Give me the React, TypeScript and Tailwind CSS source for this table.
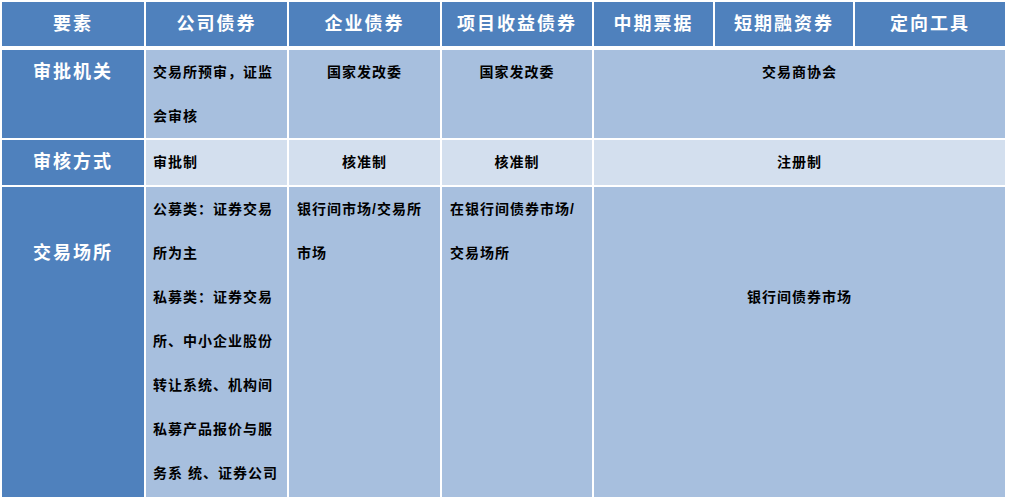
// 债券品种对比表 — 要素 / 审批机关 / 审核方式 / 交易场所

const cols = "grid grid-cols-[142px_141px_151px_150px_119px_138px_150px] gap-x-[2px]";

const headers = ["要素", "公司债券", "企业债券", "项目收益债券", "中期票据", "短期融资券", "定向工具"];

const Side = ({ children, pad = "" }: { children: React.ReactNode; pad?: string }) => (
  <div className={`bg-[#4f81bd] text-white text-[18px] font-bold tracking-[2px] leading-[44px] text-center ${pad}`}>
    {children}
  </div>
);

const Cell = ({
  lines,
  bg,
  center = false,
  span = false,
  pad = "",
}: {
  lines: string[];
  bg: string;
  center?: boolean;
  span?: boolean;
  pad?: string;
}) => (
  <div
    className={`${bg} ${span ? "col-span-3" : ""} ${center ? "text-center" : "pl-[7px]"} ${pad} text-black text-[14px] font-bold tracking-[1px] leading-[44px] whitespace-nowrap`}
  >
    {lines.map((l, i) => (
      <div key={i}>{l}</div>
    ))}
  </div>
);

export default function App() {
  const mid = "bg-[#a7bfde]";
  const light = "bg-[#d3dfee]";

  return (
    <div className="w-[1009px] h-[500px] bg-white pl-[2px] pt-[2px] font-['Liberation_Sans','Noto_Sans_CJK_SC',sans-serif]">
      <div className={`${cols} mb-[4px]`}>
        {headers.map((h) => (
          <div
            key={h}
            className="bg-[#4f81bd] h-[44px] text-white text-[18px] font-bold tracking-[2px] leading-[44px] text-center"
          >
            {h}
          </div>
        ))}
      </div>

      <div className={`${cols} grid-rows-[88px_45px_310px] gap-y-[2px]`}>
        {/* 审批机关 */}
        <Side>审批机关</Side>
        <Cell bg={mid} lines={["交易所预审，证监", "会审核"]} />
        <Cell bg={mid} center lines={["国家发改委"]} />
        <Cell bg={mid} center lines={["国家发改委"]} />
        <Cell bg={mid} center span lines={["交易商协会"]} />

        {/* 审核方式 */}
        <Side>审核方式</Side>
        <Cell bg={light} lines={["审批制"]} />
        <Cell bg={light} center lines={["核准制"]} />
        <Cell bg={light} center lines={["核准制"]} />
        <Cell bg={light} center span lines={["注册制"]} />

        {/* 交易场所 */}
        <Side pad="pt-[44px]">交易场所</Side>
        <Cell
          bg={mid}
          lines={[
            "公募类：证券交易",
            "所为主",
            "私募类：证券交易",
            "所、中小企业股份",
            "转让系统、机构间",
            "私募产品报价与服",
            "务系 统、证券公司",
          ]}
        />
        <Cell bg={mid} pad="pl-[8px]" lines={["银行间市场/交易所", "市场"]} />
        <Cell bg={mid} pad="pl-[8px]" lines={["在银行间债券市场/", "交易场所"]} />
        <Cell bg={mid} center span pad="pt-[88px]" lines={["银行间债券市场"]} />
      </div>
    </div>
  );
}
